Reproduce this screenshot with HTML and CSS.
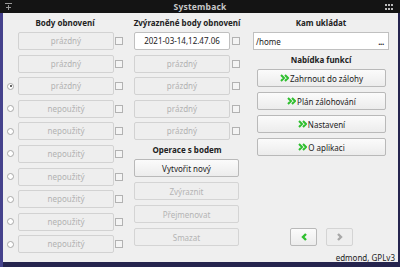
FILE: index.html
```html
<!DOCTYPE html>
<html lang="cs">
<head>
  <meta charset="UTF-8" />
  <title>Systemback</title>
  <link rel="stylesheet" href="styles.css">
</head>
<body>

<div class="titlebar">
  <svg class="tb-menu" width="7" height="7" viewBox="0 0 7 7"><path d="M0 0.5h7M3.5 2v5M1 4.5h5" stroke="#9a9a9a" stroke-width="1" fill="none"/></svg>
  <span class="title">Systemback</span>
  <svg class="tb-grid" width="8" height="6" viewBox="0 0 8 6">
    <rect x="0" y="0" width="2" height="2" fill="#bbb"/><rect x="3" y="0" width="2" height="2" fill="#bbb"/><rect x="6" y="0" width="2" height="2" fill="#bbb"/>
    <rect x="0" y="4" width="2" height="2" fill="#bbb"/><rect x="3" y="4" width="2" height="2" fill="#bbb"/><rect x="6" y="4" width="2" height="2" fill="#bbb"/>
  </svg>
</div>

<div class="window">
  <div class="col col-points">
    <div class="head">Body obnovení</div>
    <div class="rows">
      <div class="row"><span class="radio hidden"></span><span class="slot">prázdný</span><span class="check"></span></div>
      <div class="row"><span class="radio hidden"></span><span class="slot">prázdný</span><span class="check"></span></div>
      <div class="row"><span class="radio on"></span><span class="slot">prázdný</span><span class="check"></span></div>
      <div class="row"><span class="radio"></span><span class="slot">nepoužitý</span><span class="check"></span></div>
      <div class="row"><span class="radio"></span><span class="slot">nepoužitý</span><span class="check"></span></div>
      <div class="row"><span class="radio"></span><span class="slot">nepoužitý</span><span class="check"></span></div>
      <div class="row"><span class="radio"></span><span class="slot">nepoužitý</span><span class="check"></span></div>
      <div class="row"><span class="radio"></span><span class="slot">nepoužitý</span><span class="check"></span></div>
      <div class="row"><span class="radio"></span><span class="slot">nepoužitý</span><span class="check"></span></div>
      <div class="row"><span class="radio"></span><span class="slot">nepoužitý</span><span class="check"></span></div>
    </div>
  </div>

  <div class="col col-high">
    <div class="head">Zvýrazněné body obnovení</div>
    <div class="rows">
      <div class="row"><span class="slot filled">2021-03-14,12.47.06</span><span class="check"></span></div>
      <div class="row"><span class="slot">prázdný</span><span class="check"></span></div>
      <div class="row"><span class="slot">prázdný</span><span class="check"></span></div>
      <div class="row"><span class="slot">prázdný</span><span class="check"></span></div>
      <div class="row"><span class="slot">prázdný</span><span class="check"></span></div>
    </div>
    <div class="head">Operace s bodem</div>
    <div class="buttons">
      <button class="btn">Vytvořit nový</button>
      <button class="btn" disabled>Zvýraznit</button>
      <button class="btn" disabled>Přejmenovat</button>
      <button class="btn" disabled>Smazat</button>
    </div>
  </div>

  <div class="col col-menu">
    <div class="head">Kam ukládat</div>
    <div class="path"><span>/home</span><span class="dots">...</span></div>
    <div class="head">Nabídka funkcí</div>
    <div class="buttons">
      <button class="btn"><svg class="chev" width="9" height="8" viewBox="0 0 9 8"><path d="M1 1l3 3-3 3M5 1l3 3-3 3" stroke="#2fbf2f" stroke-width="2" fill="none"/></svg>Zahrnout do zálohy</button>
      <button class="btn"><svg class="chev" width="9" height="8" viewBox="0 0 9 8"><path d="M1 1l3 3-3 3M5 1l3 3-3 3" stroke="#2fbf2f" stroke-width="2" fill="none"/></svg>Plán zálohování</button>
      <button class="btn"><svg class="chev" width="9" height="8" viewBox="0 0 9 8"><path d="M1 1l3 3-3 3M5 1l3 3-3 3" stroke="#2fbf2f" stroke-width="2" fill="none"/></svg>Nastavení</button>
      <button class="btn"><svg class="chev" width="9" height="8" viewBox="0 0 9 8"><path d="M1 1l3 3-3 3M5 1l3 3-3 3" stroke="#2fbf2f" stroke-width="2" fill="none"/></svg>O aplikaci</button>
    </div>
    <div class="nav">
      <button class="btn nav-btn"><svg width="8" height="8" viewBox="0 0 8 8"><path d="M6 1L3 4l3 3" stroke="#2fbf2f" stroke-width="2.4" fill="none"/></svg></button>
      <button class="btn nav-btn" disabled><svg width="8" height="8" viewBox="0 0 8 8"><path d="M2 1l3 3-3 3" stroke="#a8a8a8" stroke-width="2.4" fill="none"/></svg></button>
    </div>
    <div class="footer">edmond, GPLv3</div>
  </div>
</div>

</body>
</html>
```

FILE: styles.css
```css
body {
  margin: 0;
  width: 400px;
  height: 267px;
  overflow: hidden;
  background: linear-gradient(90deg, #45428c 0, #45428c 3px, #25244e 3px);
  font-family: 'Noto Sans', sans-serif;
  font-size: 8px;
  color: #222;
}
.titlebar {
  height: 13px;
  background: #141414;
  display: flex;
  align-items: center;
  justify-content: center;
  position: relative;
}
.title {
  color: #c8c8c8;
  font-weight: bold;
  font-size: 8.5px;
  letter-spacing: 0.2px;
}
.tb-menu {
  position: absolute;
  left: 5px;
  top: 3px;
}
.tb-grid {
  position: absolute;
  right: 7px;
  top: 4px;
}
.window {
  margin-left: 3px;
  width: 395px;
  height: 249px;
  background: #efefef;
  display: flex;
  padding-left: 4px;
  box-sizing: border-box;
}
.col {
  display: flex;
  flex-direction: column;
}
.col-points {
  width: 116px;
}
.col-high {
  width: 106px;
  margin-left: 11px;
}
.col-menu {
  width: 142px;
  margin-left: 13px;
}
.head {
  height: 19px;
  line-height: 19px;
  display: flex;
  justify-content: center;
  white-space: nowrap;
  font-weight: bold;
  flex-shrink: 0;
}
.col-menu .head {
  width: 136px;
}
.rows {
  display: flex;
  flex-direction: column;
  gap: 4.6px;
}
.row {
  height: 18px;
  display: flex;
  align-items: center;
}
.radio {
  width: 7px;
  height: 7px;
  border: 1px solid #a8a8a8;
  border-radius: 50%;
  background: #fff;
  box-sizing: border-box;
  margin-right: 4px;
  position: relative;
  flex-shrink: 0;
}
.radio.hidden {
  visibility: hidden;
}
.radio.on::after {
  content: '';
  position: absolute;
  left: 1.5px;
  top: 1.5px;
  width: 2px;
  height: 2px;
  border-radius: 50%;
  background: #333;
}
.slot {
  width: 96px;
  height: 18px;
  box-sizing: border-box;
  border: 1px solid #d2d2d2;
  border-radius: 2px;
  background: #eeeeee;
  color: #b2b2b2;
  text-align: center;
  line-height: 16px;
}
.slot.filled {
  background: #fff;
  border-color: #c0c0c0;
  color: #222;
}
.check {
  width: 8px;
  height: 8px;
  border: 1px solid #b2b2b2;
  background: #f4f4f4;
  box-sizing: border-box;
  margin-left: 1px;
  flex-shrink: 0;
}
.col-high .check {
  margin-left: 2px;
}
.buttons {
  display: flex;
  flex-direction: column;
  gap: 5px;
}
.btn {
  height: 18px;
  box-sizing: border-box;
  border: 1px solid #b9b9b9;
  border-radius: 2px;
  background: linear-gradient(#fbfbfb, #ececec);
  font-family: inherit;
  font-size: 8px;
  color: #222;
  padding: 0;
  display: flex;
  align-items: center;
  justify-content: center;
}
.btn:disabled {
  border-color: #d4d4d4;
  background: #eeeeee;
  color: #b4b4b4;
}
.col-high .btn {
  width: 105px;
}
.col-menu .btn {
  width: 129px;
  margin-left: 4px;
}
.chev {
  margin-right: 1px;
}
.path {
  width: 136px;
  height: 18px;
  box-sizing: border-box;
  border: 1px solid #c0c0c0;
  background: #fff;
  display: flex;
  align-items: center;
  justify-content: space-between;
  padding: 0 4px 0 2px;
}
.dots {
  font-weight: bold;
  font-size: 8px;
  letter-spacing: -0.3px;
}
.nav {
  margin-top: auto;
  display: flex;
  gap: 9px;
  padding-left: 37px;
}
.col-menu .nav-btn {
  width: 27px;
  margin-left: 0;
}
.footer {
  margin-top: 5px;
  height: 11px;
  line-height: 14px;
  text-align: right;
  white-space: nowrap;
}
```
